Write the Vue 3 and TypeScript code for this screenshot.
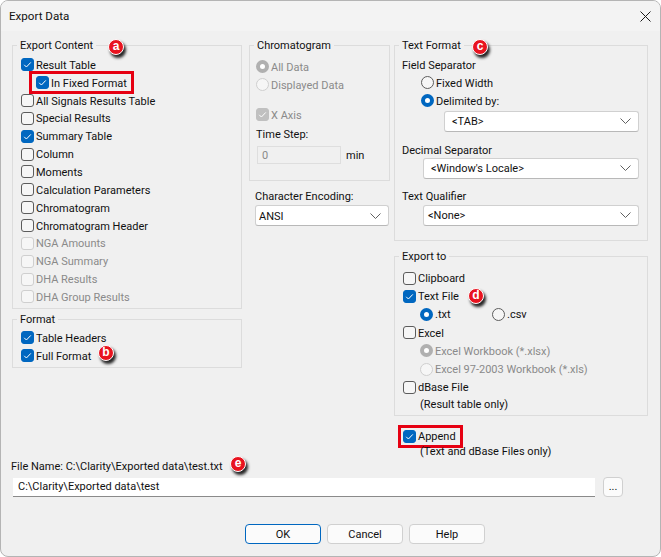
<script setup lang="ts">
interface Item { label: string; checked?: boolean; disabled?: boolean; sub?: boolean }
const exportItems: Item[] = [
  { label: 'Result Table', checked: true },
  { label: 'In Fixed Format', checked: true, sub: true },
  { label: 'All Signals Results Table' },
  { label: 'Special Results' },
  { label: 'Summary Table', checked: true },
  { label: 'Column' },
  { label: 'Moments' },
  { label: 'Calculation Parameters' },
  { label: 'Chromatogram' },
  { label: 'Chromatogram Header' },
  { label: 'NGA Amounts', disabled: true },
  { label: 'NGA Summary', disabled: true },
  { label: 'DHA Results', disabled: true },
  { label: 'DHA Group Results', disabled: true },
]
const badges = [
  { l: 'a', x: 115, y: 46 },
  { l: 'b', x: 105, y: 352 },
  { l: 'c', x: 479, y: 46 },
  { l: 'd', x: 475, y: 295 },
  { l: 'e', x: 237, y: 463 },
]
function badgeStyle(b: { x: number; y: number }) {
  return { left: b.x - 8 + 'px', top: b.y - 8 + 'px' }
}
</script>

<template>
  <div class="window">
    <header class="titlebar">
      <span>Export Data</span>
      <svg class="close" width="11" height="11" viewBox="0 0 11 11"><path d="M.5.5l10 10M10.5.5l-10 10" stroke="#1a1a1a" fill="none" /></svg>
    </header>

    <main class="body">
      <div class="columns">
        <div class="col col1">
          <fieldset class="group export-content">
            <legend>Export Content</legend>
            <div v-for="it in exportItems" :key="it.label" class="row" :class="{ sub: it.sub, dis: it.disabled }">
              <span class="check-wrap" :class="{ hl: it.sub }">
                <span class="cb" :class="{ on: it.checked, off: it.disabled }">
                  <svg v-if="it.checked" viewBox="0 0 13 13"><path d="M3.2 6.8l2.2 2.2 4.4-4.6" /></svg>
                </span>
                <span class="t">{{ it.label }}</span>
              </span>
            </div>
          </fieldset>
          <fieldset class="group format">
            <legend>Format</legend>
            <div class="row"><span class="cb on"><svg viewBox="0 0 13 13"><path d="M3.2 6.8l2.2 2.2 4.4-4.6" /></svg></span><span class="t">Table Headers</span></div>
            <div class="row"><span class="cb on"><svg viewBox="0 0 13 13"><path d="M3.2 6.8l2.2 2.2 4.4-4.6" /></svg></span><span class="t">Full Format</span></div>
          </fieldset>
        </div>

        <div class="col col2">
          <fieldset class="group chroma">
            <legend>Chromatogram</legend>
            <div class="row dis"><span class="rb gray"></span><span class="t">All Data</span></div>
            <div class="row dis"><span class="rb off"></span><span class="t">Displayed Data</span></div>
            <div class="row dis xaxis"><span class="cb graychk"><svg viewBox="0 0 13 13"><path d="M3.2 6.8l2.2 2.2 4.4-4.6" /></svg></span><span class="t">X Axis</span></div>
            <div class="label step">Time Step:</div>
            <div class="step-row">
              <div class="num">0</div>
              <span class="t">min</span>
            </div>
          </fieldset>
          <div class="label enc">Character Encoding:</div>
          <div class="select enc-sel">
            <span class="t">ANSI</span>
            <svg width="11" height="6" viewBox="0 0 11 6"><path d="M.5.5l5 5 5-5" /></svg>
          </div>
        </div>

        <div class="col col3">
          <fieldset class="group textfmt">
            <legend>Text Format</legend>
            <div class="label fs">Field Separator</div>
            <div class="row rad first"><span class="rb"></span><span class="t">Fixed Width</span></div>
            <div class="row rad"><span class="rb on"></span><span class="t">Delimited by:</span></div>
            <div class="select tab"><span class="t">&lt;TAB&gt;</span><svg width="11" height="6" viewBox="0 0 11 6"><path d="M.5.5l5 5 5-5" /></svg></div>
            <div class="label ds">Decimal Separator</div>
            <div class="select wide locale"><span class="t">&lt;Window's Locale&gt;</span><svg width="11" height="6" viewBox="0 0 11 6"><path d="M.5.5l5 5 5-5" /></svg></div>
            <div class="label tq">Text Qualifier</div>
            <div class="select wide none"><span class="t">&lt;None&gt;</span><svg width="11" height="6" viewBox="0 0 11 6"><path d="M.5.5l5 5 5-5" /></svg></div>
          </fieldset>

          <fieldset class="group exportto">
            <legend>Export to</legend>
            <div class="row"><span class="cb"></span><span class="t">Clipboard</span></div>
            <div class="row"><span class="cb on"><svg viewBox="0 0 13 13"><path d="M3.2 6.8l2.2 2.2 4.4-4.6" /></svg></span><span class="t">Text File</span></div>
            <div class="row filetypes">
              <span class="ft ft1"><span class="rb on"></span><span class="t">.txt</span></span>
              <span class="ft"><span class="rb"></span><span class="t">.csv</span></span>
            </div>
            <div class="row"><span class="cb"></span><span class="t">Excel</span></div>
            <div class="row dis indent"><span class="rb gray"></span><span class="t">Excel Workbook (*.xlsx)</span></div>
            <div class="row dis indent"><span class="rb off"></span><span class="t">Excel 97-2003 Workbook (*.xls)</span></div>
            <div class="row"><span class="cb"></span><span class="t">dBase File</span></div>
            <div class="note">(Result table only)</div>
          </fieldset>

          <div class="append">
            <span class="check-wrap hl"><span class="cb on"><svg viewBox="0 0 13 13"><path d="M3.2 6.8l2.2 2.2 4.4-4.6" /></svg></span><span class="t">Append</span></span>
          </div>
          <div class="note append-note">(Text and dBase Files only)</div>
        </div>
      </div>

      <div class="file-label">File Name: C:\Clarity\Exported data\test.txt</div>
      <div class="file-row">
        <div class="file-input">C:\Clarity\Exported data\test</div>
        <button class="btn dots" type="button">...</button>
      </div>

      <div class="actions">
        <button class="btn primary" type="button"><span class="t">OK</span></button>
        <button class="btn" type="button"><span class="t">Cancel</span></button>
        <button class="btn" type="button"><span class="t">Help</span></button>
      </div>
    </main>

    <span v-for="b in badges" :key="b.l" class="badge" :style="badgeStyle(b)">{{ b.l }}</span>
  </div>
</template>

<style>
html, body { margin: 0; background: #fff; }
</style>

<style scoped>
.window {
  position: relative;
  box-sizing: border-box;
  width: 661px;
  height: 557px;
  border: 1px solid #b4b4b4;
  border-radius: 8px;
  background: #f0f0f0;
  overflow: hidden;
  font-family: Roboto, "Noto Sans", sans-serif;
  font-size: 11px;
  line-height: 16px;
  color: #111;
}
.titlebar {
  height: 30px;
  background: #f3f3f3;
  display: flex;
  align-items: center;
  justify-content: space-between;
  padding: 0 9px 0 8px;
  font-size: 11.6px;
}
.t { display: inline-block; padding-top: 2px; }
.body { padding: 6px 0 0 11px; }
.columns { display: flex; height: 419px; }
.col { display: flex; flex-direction: column; }
.col1 { width: 230px; margin-right: 7px; }
.col2 { width: 141px; margin-right: 4px; }
.col3 { width: 254px; }
.group {
  --p: 8px;
  flex: none;
  margin: 0;
  padding: 0 0 0 var(--p);
  min-width: 0;
  box-sizing: border-box;
  border: 1px solid #dcdcdc;
}
legend { margin-left: calc(4px - var(--p)); padding: 0 3px; line-height: 18px; height: 16px; }
.row { display: flex; align-items: center; height: 17.85px; }
.cb, .rb {
  flex: none;
  box-sizing: border-box;
  display: inline-block;
  width: 13px;
  height: 13px;
  background: #f6f6f6;
  border: 1px solid #5c5c5c;
  margin-right: 2px;
}
.cb { border-radius: 3px; }
.cb svg { display: block; width: 13px; height: 13px; margin: -1px; fill: none; stroke: #fff; stroke-width: 1; }
.cb.on { background: #0067c0; border-color: #0067c0; }
.cb.off { border-color: #cfcfcf; }
.cb.graychk { background: #c0c0c0; border-color: #c0c0c0; }
.rb { border-radius: 50%; position: relative; }
.rb.on { background: #fff; border: 4px solid #0067c0; }
.rb.gray { background: #fff; border: 4px solid #b0b0b0; }
.rb.off { border-color: #cfcfcf; }
.dis { color: #8a8a8a; }
.export-content { height: 272px; padding-top: 3px; }
.sub { padding-left: 15px; }
.check-wrap { display: inline-flex; align-items: center; }
.hl { outline: 3px solid #e60012; }
.sub .hl { outline-offset: 1px; padding: 0 3px 0 3px; margin-left: -3px; height: 15px; }
.format { height: 57px; margin-top: 2px; padding-top: 2px; }
.chroma { --p: 6px; height: 144px; padding-top: 5px; }
.xaxis { margin-top: 12px; }
.label { height: 16px; line-height: 18px; }
.step { margin-top: 2px; }
.step-row { display: flex; align-items: center; margin: 4px 0 0 1px; gap: 5px; }
.num {
  box-sizing: border-box;
  width: 84px;
  height: 18px;
  border: 1px solid #dedede;
  padding-left: 4px;
  line-height: 17px;
  color: #8a8a8a;
}
.enc { margin: 7px 0 0 6px; }
.select {
  box-sizing: border-box;
  height: 21px;
  display: flex;
  align-items: center;
  justify-content: space-between;
  background: #fff;
  border: 1px solid #d0d0d0;
  border-bottom-color: #b8b8b8;
  border-radius: 3px;
  padding: 0 7px 0 6px;
}
.select svg { fill: none; stroke: #606060; }
.enc-sel { margin: 1px 0 0 6px; width: 134px; padding-left: 3px; }
.textfmt { --p: 7px; height: 204px; padding-top: 4px; }
.rad { padding-left: 19px; }
.rad.first { margin-top: 1px; }
.tab { margin: 1px 8px 0 42px; padding-left: 7px; }
.ds { margin-top: 10px; }
.wide { margin: 1px 8px 0 21px; padding-left: 7px; }
.locale { margin-top: 0; }
.none { padding-left: 4px; }
.tq { margin-top: 9px; }
.exportto { --p: 8px; height: 168px; margin-top: 7px; padding-top: 5px; }
.exportto .row { height: 18.2px; }
.filetypes { padding-left: 17px; }
.ft { display: inline-flex; align-items: center; }
.ft1 { width: 72px; }
.indent { padding-left: 17px; }
.note { padding-left: 17px; height: 17px; line-height: 18px; }
.append { flex: none; margin: 11px 0 0 9px; height: 18px; display: flex; align-items: center; }
.append .hl { outline-offset: 1px; padding: 0 3px 0 1px; margin-left: -1px; height: 15px; }
.append-note { flex: none; margin: -2px 0 0 9px; padding-left: 17px; }
.file-label { height: 16px; margin-top: 2px; margin-left: -1px; line-height: 18px; }
.file-row { display: flex; align-items: center; margin-top: 3px; }
.file-input {
  box-sizing: border-box;
  width: 582px;
  height: 19px;
  margin-left: 1px;
  background: #fff;
  border-bottom: 1px solid #8a8a8a;
  padding-left: 5px;
  line-height: 18px;
}
.btn {
  box-sizing: border-box;
  width: 76px;
  height: 20px;
  padding: 0;
  background: #fbfbfb;
  border: 1px solid #d0d0d0;
  border-radius: 4px;
  font: inherit;
  color: inherit;
}
.dots { width: 20px; margin-left: 8px; line-height: 12px; }
.actions { display: flex; gap: 6px; margin: 27px 0 0 233px; }
.primary { border-color: #0067c0; }
.badge {
  position: absolute;
  box-sizing: border-box;
  width: 16px;
  height: 16px;
  border-radius: 50%;
  background: #e8131f;
  border: 1px solid #fff;
  box-shadow: 2px 3px 3px rgba(0, 0, 0, .85);
  color: #fff;
  font: bold 12px/12px "Liberation Sans", sans-serif;
  text-align: center;
}
</style>
